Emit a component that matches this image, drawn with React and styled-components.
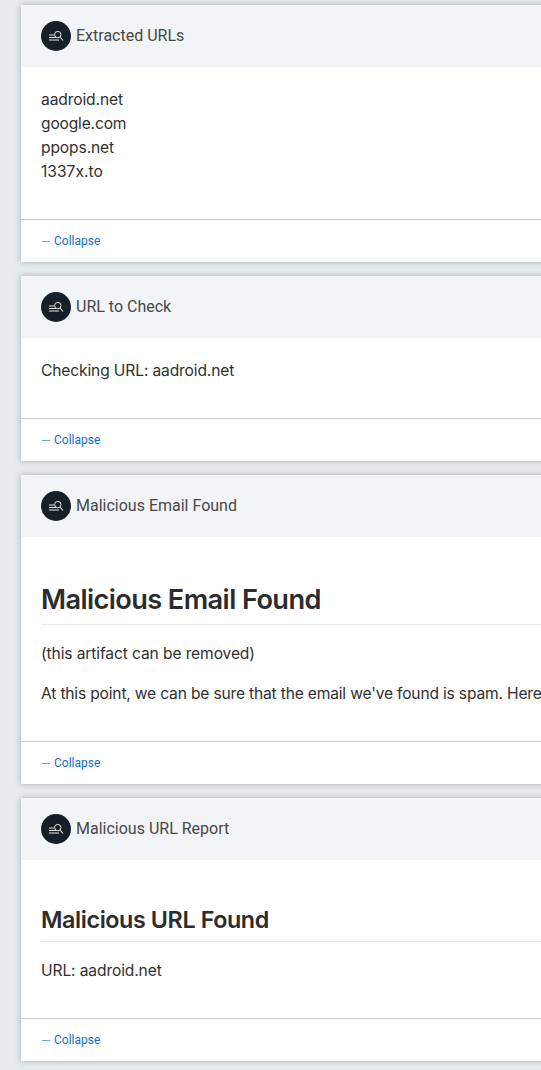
import React from "react";
import styled, { createGlobalStyle } from "styled-components";

const GlobalStyle = createGlobalStyle`
  * { box-sizing: border-box; }
  html, body { margin: 0; padding: 0; background: #e6ebee; overflow: hidden; }
`;

const Page = styled.main`
  height: 1070px;
  padding: 5px 0 0 21px;
  display: flex;
  flex-direction: column;
  gap: 14px;
  overflow: hidden;
  background: #e6ebee;
`;

const Card = styled.section`
  flex: none;
  width: 560px;
  background: #fff;
  box-shadow: 0 0 6px rgba(60, 68, 85, 0.38);
`;

const CardHeader = styled.header`
  height: 62px;
  padding: 0 20px;
  display: flex;
  align-items: center;
  gap: 5px;
  background: #f2f4f8;
`;

const Badge = styled.span`
  width: 30px;
  height: 30px;
  border-radius: 50%;
  background: #161e27;
  svg { display: block; }
`;

const CardTitle = styled.span`
  font: 400 16px/24px Roboto, sans-serif;
  color: #484848;
`;

const CardBody = styled.div`
  padding: 21px 20px 35px;
  font: 400 15.6px/24px Inter, sans-serif;
  color: #303030;
`;

const Line = styled.p`
  margin: 0 0 ${(p) => (p.$spaced ? 16 : 0)}px;
  letter-spacing: ${(p) => p.$track ?? -0.12}px;
  white-space: nowrap;
`;

const Heading = styled.h1`
  margin: 23px 0 17px;
  padding-top: 1px;
  padding-bottom: ${(p) => (p.$small ? 6 : 7)}px;
  border-bottom: 1px solid #e9e9e9;
  font-family: Inter, sans-serif;
  font-size: ${(p) => (p.$small ? 23.3 : 27.2)}px;
  line-height: ${(p) => (p.$small ? 30 : 35)}px;
  font-weight: 600;
  letter-spacing: ${(p) => (p.$small ? -0.4 : -0.6)}px;
  color: #2c2c2c;
`;

const CardFooter = styled.footer`
  height: 43px;
  padding: 0 20px;
  display: flex;
  align-items: center;
  border-top: 1px solid #cacbcd;
`;

const Collapse = styled.a`
  display: flex;
  align-items: center;
  gap: 4px;
  font: 400 12px/18px Roboto, sans-serif;
  color: #1170c4;
`;

const Dash = styled.span`
  width: 8px;
  height: 1px;
  margin-left: 1px;
  background: #6aa5da;
`;

const SearchListIcon = () => (
  <svg width="30" height="30" viewBox="0 0 30 30" fill="none" stroke="#e4e6e8">
    <path d="M8 14h5M8 16.5h7" />
    <path d="M8 19h10" strokeWidth="1.3" stroke="#b4b8bc" />
    <circle cx="16.8" cy="13.6" r="3.2" />
    <path d="M19 16l3 3.5" strokeWidth="1.1" />
  </svg>
);

const ArtifactCard = ({ title, children }) => (
  <Card>
    <CardHeader>
      <Badge><SearchListIcon /></Badge>
      <CardTitle>{title}</CardTitle>
    </CardHeader>
    <CardBody>{children}</CardBody>
    <CardFooter>
      <Collapse><Dash />Collapse</Collapse>
    </CardFooter>
  </Card>
);

export default function App() {
  return (
    <>
      <GlobalStyle />
      <Page>
        <ArtifactCard title="Extracted URLs">
          <Line>aadroid.net</Line>
          <Line $track={-0.18}>google.com</Line>
          <Line>ppops.net</Line>
          <Line $track={0}>1337x.to</Line>
        </ArtifactCard>
        <ArtifactCard title="URL to Check">
          <Line $track={-0.14}>Checking URL: aadroid.net</Line>
        </ArtifactCard>
        <ArtifactCard title="Malicious Email Found">
          <Heading>Malicious Email Found</Heading>
          <Line $spaced>(this artifact can be removed)</Line>
          <Line $track={-0.18}>At this point, we can be sure that the email we've found is spam. Here</Line>
        </ArtifactCard>
        <ArtifactCard title="Malicious URL Report">
          <Heading as="h2" $small>Malicious URL Found</Heading>
          <Line>URL: aadroid.net</Line>
        </ArtifactCard>
      </Page>
    </>
  );
}
